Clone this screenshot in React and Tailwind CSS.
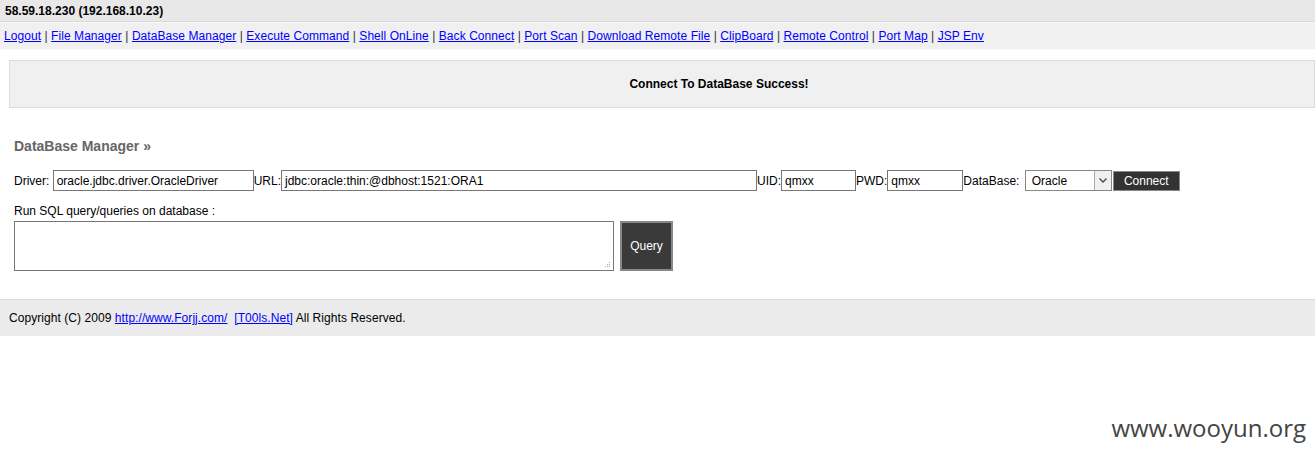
import React from "react";

const links = ["Logout","File Manager","DataBase Manager","Execute Command","Shell OnLine","Back Connect","Port Scan","Download Remote File","ClipBoard","Remote Control","Port Map","JSP Env"];

export default function App() {
  return (
    <div className="relative w-[1315px] h-[455px] bg-white text-[12px] text-black" style={{fontFamily: '"Liberation Sans", Arial, sans-serif'}}>
      <div className="h-[22px] bg-[#e8e8e8] border-b border-[#d8d8d8] pl-[5px] flex items-center font-bold">58.59.18.230 (192.168.10.23)</div>
      <div className="h-[28px] bg-[#f0f0f0] border-t border-[#f8f8f8] border-b border-[#dcdcdc] pl-[4px] flex items-center tracking-[0.065px]">
        {links.map((l, i) => (
          <React.Fragment key={l}>
            {i > 0 && <span className="whitespace-pre text-[#333]"> | </span>}
            <a href="#" className="text-[#0000ff] underline">{l}</a>
          </React.Fragment>
        ))}
      </div>
      <div className="ml-[9px] mt-[10px] h-[48px] bg-[#f0f0f0] border border-[#dcdcdc] flex items-center justify-center pl-[114px] font-bold">Connect To DataBase Success!</div>
      <div className="pl-[14px] pt-[28px] font-bold text-[14px] text-[#666]">DataBase Manager »</div>
      <div className="pl-[14px] mt-[13px] flex items-center h-[21px]">
        <span>Driver:&nbsp;</span>
        <div className="w-[201px] h-[21px] border border-[#777] px-[3px] flex items-center">oracle.jdbc.driver.OracleDriver</div>
        <span>URL:</span>
        <div className="w-[476px] h-[21px] border border-[#777] px-[3px] flex items-center">jdbc:oracle:thin:@dbhost:1521:ORA1</div>
        <span>UID:</span>
        <div className="w-[75px] h-[21px] border border-[#777] px-[3px] flex items-center">qmxx</div>
        <span>PWD:</span>
        <div className="w-[76px] h-[21px] border border-[#777] px-[3px] flex items-center">qmxx</div>
        <span className="mr-[2px]">DataBase:&nbsp;</span>
        <div className="w-[87px] h-[21px] border border-[#888] flex items-center pl-[6px] justify-between">
          <span>Oracle</span>
          <div className="w-[17px] h-[19px] border-l border-[#aaa] bg-[#f0f0f0] flex items-center justify-center">
            <svg width="8" height="5" viewBox="0 0 8 5"><path d="M0.5 0.5 L4 4 L7.5 0.5" fill="none" stroke="#444" strokeWidth="1.3"/></svg>
          </div>
        </div>
        <div className="ml-[1px] w-[67px] h-[20px] bg-[#333] border border-[#888] text-white flex items-center justify-center">Connect</div>
      </div>
      <div className="pl-[14px] mt-[13px] leading-[14px]">Run SQL query/queries on database :</div>
      <div className="pl-[14px] mt-[3px] flex items-start">
        <div className="relative w-[600px] h-[50px] border border-[#777]">
          <svg className="absolute right-[2px] bottom-[2px]" width="7" height="7" viewBox="0 0 7 7"><g fill="#aaa"><rect x="5" y="1" width="1" height="1"/><rect x="3" y="3" width="1" height="1"/><rect x="5" y="3" width="1" height="1"/><rect x="1" y="5" width="1" height="1"/><rect x="3" y="5" width="1" height="1"/><rect x="5" y="5" width="1" height="1"/></g></svg>
        </div>
        <div className="ml-[6px] w-[53px] h-[50px] bg-[#3a3a3a] border-2 border-[#888] text-white flex items-center justify-center">Query</div>
      </div>
      <div className="mt-[28px] h-[37px] bg-[#ebebeb] border-t border-[#dcdcdc] pl-[9px] flex items-center tracking-[0.06px]">
        <span className="whitespace-pre">Copyright (C) 2009 <a href="#" className="text-[#0000ff] underline">http://www.Forjj.com/</a>  <a href="#" className="text-[#0000ff] underline">[T00ls.Net]</a> All Rights Reserved.</span>
      </div>
      <div className="absolute right-[9px] top-[410px] text-[24px] text-[#444]" style={{fontFamily: '"Open Sans", sans-serif'}}>www.wooyun.org</div>
    </div>
  );
}
